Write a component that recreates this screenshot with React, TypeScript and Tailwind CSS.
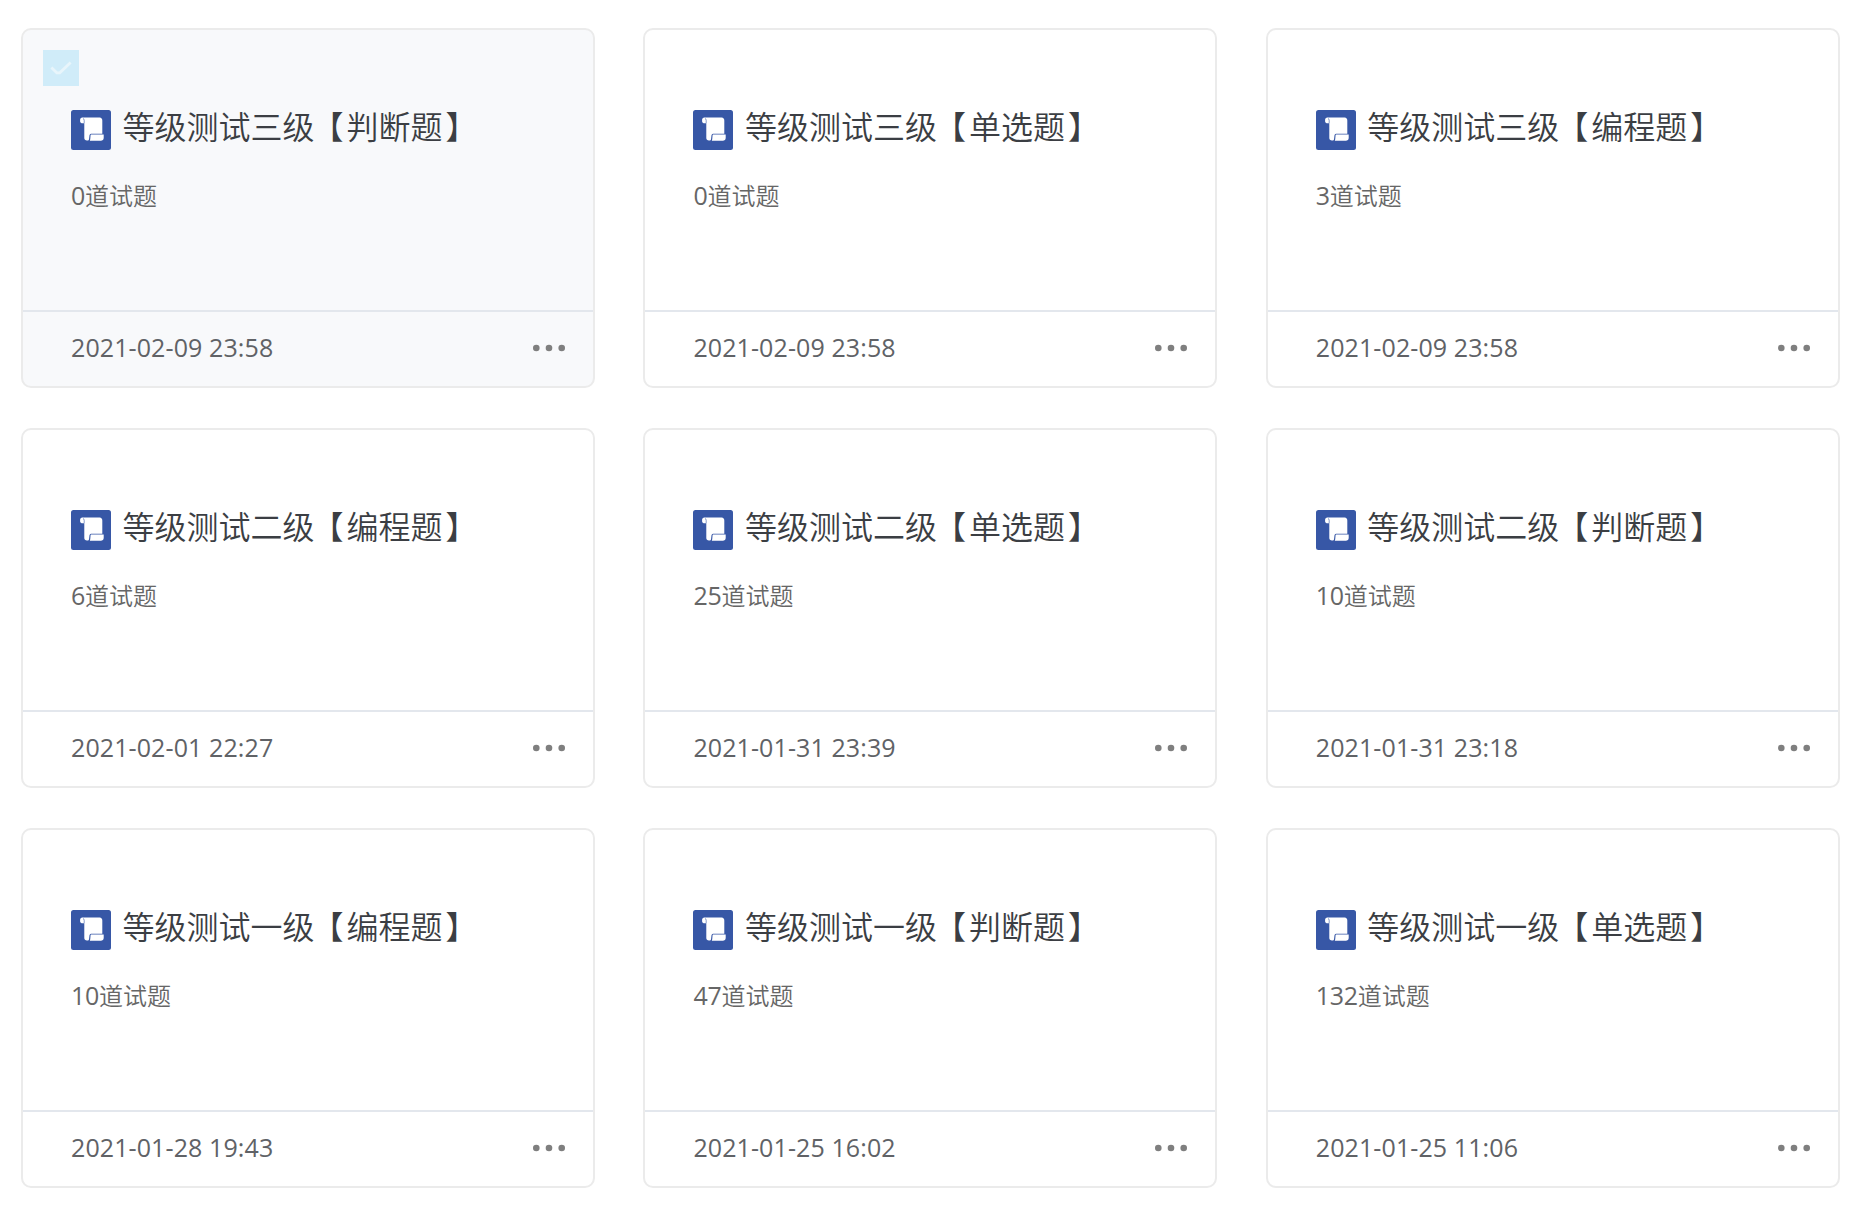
interface Paper {
  level: string;
  type: string;
  count: number;
  createdAt: string;
  selected?: boolean;
}

const papers: Paper[] = [
  { level: '等级测试三级', type: '判断题', count: 0, createdAt: '2021-02-09 23:58', selected: true },
  { level: '等级测试三级', type: '单选题', count: 0, createdAt: '2021-02-09 23:58' },
  { level: '等级测试三级', type: '编程题', count: 3, createdAt: '2021-02-09 23:58' },
  { level: '等级测试二级', type: '编程题', count: 6, createdAt: '2021-02-01 22:27' },
  { level: '等级测试二级', type: '单选题', count: 25, createdAt: '2021-01-31 23:39' },
  { level: '等级测试二级', type: '判断题', count: 10, createdAt: '2021-01-31 23:18' },
  { level: '等级测试一级', type: '编程题', count: 10, createdAt: '2021-01-28 19:43' },
  { level: '等级测试一级', type: '判断题', count: 47, createdAt: '2021-01-25 16:02' },
  { level: '等级测试一级', type: '单选题', count: 132, createdAt: '2021-01-25 11:06' },
];

function ScrollIcon() {
  return (
    <svg className="size-10 shrink-0" viewBox="0 0 40 40" aria-hidden="true">
      <rect width="40" height="40" rx="2.5" fill="#3757a6" />
      <path
        d="M11 7.5H28.6Q31.3 7.8 31.3 10.6V23.7H20Q18.7 23.8 18.5 25.2L18 29.4Q17.5 30.6 16 30.6Q13.3 30.4 13.3 28V13.2H10.6Q9.1 13 9.1 11.6V9.6Q9.2 7.8 11 7.5Z"
        fill="#fff"
      />
      <path d="M13.2 13.2V10.4Q13.1 8.8 12 8.3" fill="none" stroke="#3757a6" strokeWidth="0.6" />
      <path d="M20.2 24.5H32.7V28Q32.5 30.7 29.8 30.7H18.8Q19.2 29.8 19.3 28.6L19.6 25.1Q19.7 24.5 20.2 24.5Z" fill="#fff" />
    </svg>
  );
}

function PaperCard({ paper }: { paper: Paper }) {
  return (
    <div
      className={`relative flex h-[360px] flex-col rounded-[10px] border-2 border-[#ebebeb] ${
        paper.selected ? 'bg-[#f8f9fb]' : 'bg-white'
      }`}
    >
      {paper.selected && (
        <div className="absolute top-5 left-5 size-9 bg-[#d0ecf9]">
          <svg className="size-9" viewBox="0 0 36 36" fill="none" aria-hidden="true">
            <path d="M8.4 17.6L13.8 22.8H16.8L27.6 12.6" stroke="#e8f5fb" strokeWidth="2.8" />
          </svg>
        </div>
      )}
      <div className="h-[282px] border-b-2 border-[#e3e7ed] px-12 pt-20">
        <div className="flex items-center gap-[11.5px]">
          <ScrollIcon />
          <h2 className="-mt-[6px] text-[32px] leading-10 font-[350] whitespace-nowrap text-[#3b3e43]">
            {paper.level}
            <span className="-ml-[3px] mr-[3px]">【</span>
            {paper.type}
            <span className="ml-[3px]">】</span>
          </h2>
        </div>
        <p className="mt-[27px] text-2xl leading-9 font-[350] text-[#666]">
          <span className="text-[25px] font-normal tracking-[-0.3px]">{paper.count}</span>道试题
        </p>
      </div>
      <div className="flex flex-1 items-center justify-between pr-[27px] pb-[2px] pl-12">
        <span className="-mt-[2px] text-[25px] leading-9 tracking-[0.1px] text-[#606266]">{paper.createdAt}</span>
        <svg className="h-2 w-[34px]" viewBox="0 0 34 8" fill="#7f7f7f" aria-hidden="true">
          <circle cx="4.3" cy="4" r="3.3" />
          <circle cx="17" cy="4" r="3.3" />
          <circle cx="29.7" cy="4" r="3.3" />
        </svg>
      </div>
    </div>
  );
}

export default function App() {
  return (
    <div className="min-h-screen bg-white px-[21px] pt-7 font-['Open_Sans','Noto_Sans_CJK_SC',sans-serif]">
      <div className="grid w-[1818.8px] grid-cols-3 gap-x-[48.4px] gap-y-10">
        {papers.map((paper) => (
          <PaperCard key={paper.level + paper.type} paper={paper} />
        ))}
      </div>
    </div>
  );
}
